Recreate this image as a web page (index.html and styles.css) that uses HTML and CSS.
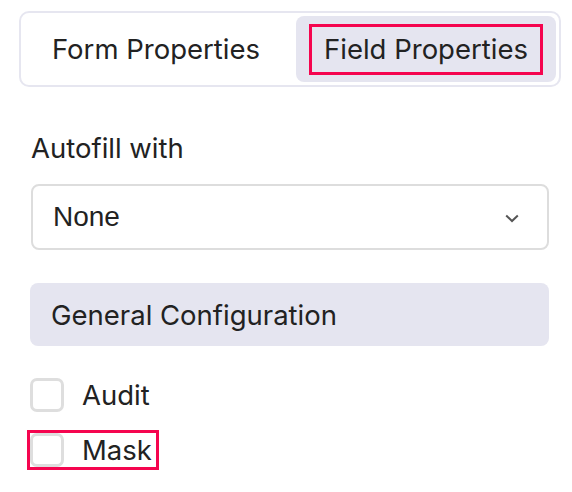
FILE: index.html
```html
<!DOCTYPE html>
<html>
<head>
<meta charset="utf-8">
<link rel="stylesheet" href="styles.css">
</head>
<body>
<div class="tabs">
  <div class="tab first"><span class="tab-label">Form Properties</span></div>
  <div class="tab active"><span class="tab-label marked">Field Properties</span></div>
</div>
<div class="content">
  <div class="label">Autofill with</div>
  <div class="select">
    <span class="select-value">None</span>
    <svg class="chevron" width="14" height="9" viewBox="0 0 14 9"><path d="M1.2 1.5 L7 7 L12.8 1.5" fill="none" stroke="#555" stroke-width="2"/></svg>
  </div>
  <div class="section">General Configuration</div>
  <div class="check-row"><span class="box"></span><span class="check-label">Audit</span></div>
  <div class="check-row marked-row"><span class="box"></span><span class="check-label">Mask</span></div>
</div>
</body>
</html>
```
FILE: styles.css
```css
html, body {
  margin: 0;
  padding: 0;
  background: #ffffff;
}
body {
  font-family: Inter, "Noto Sans", sans-serif;
  color: #222222;
  font-size: 27.5px;
  font-weight: 380;
  min-height: 492px;
}
.tabs {
  margin: 11px 11px 0 19px;
  border: 2px solid #e6e6f0;
  border-radius: 10px;
  padding: 3px;
  display: grid;
  grid-template-columns: 1fr 260px;
  height: 66px;
}
.tab {
  display: flex;
  align-items: center;
  justify-content: center;
  border-radius: 8px;
}
.tab.first {
  padding-right: 8px;
}
.tab.active {
  background: #e5e5f0;
}
.tab-label {
  line-height: 31px;
  display: inline-block;
}
.tab-label.marked {
  border: 3px solid #f5054f;
  padding: 7px 12px;
}
.content {
  padding: 0 23px 30px 31px;
}
.label {
  margin-top: 46px;
  line-height: 30px;
}
.select {
  margin-top: 21px;
  height: 62px;
  border: 2px solid #dddddd;
  border-radius: 8px;
  display: flex;
  align-items: center;
  justify-content: space-between;
  padding: 0 28px 0 20px;
}
.select-value {
  font-family: "Liberation Sans", Arial, sans-serif;
  font-size: 28px;
  font-weight: 400;
  color: #222222;
}
.chevron {
  display: block;
  margin-top: 2px;
}
.section {
  margin-top: 33px;
  margin-left: -1px;
  height: 63px;
  background: #e5e5f0;
  border-radius: 8px;
  display: flex;
  align-items: center;
  padding-left: 21px;
}
.check-row {
  display: flex;
  align-items: center;
  gap: 18px;
  height: 34px;
  margin-left: -1px;
  margin-top: 32px;
  width: fit-content;
}
.check-row + .check-row {
  margin-top: 21px;
}
.box {
  width: 34px;
  height: 34px;
  box-sizing: border-box;
  border: 3px solid #dedede;
  border-radius: 7px;
}
.marked-row {
  outline: 3px solid #f5054f;
  padding-right: 4px;
}
```
